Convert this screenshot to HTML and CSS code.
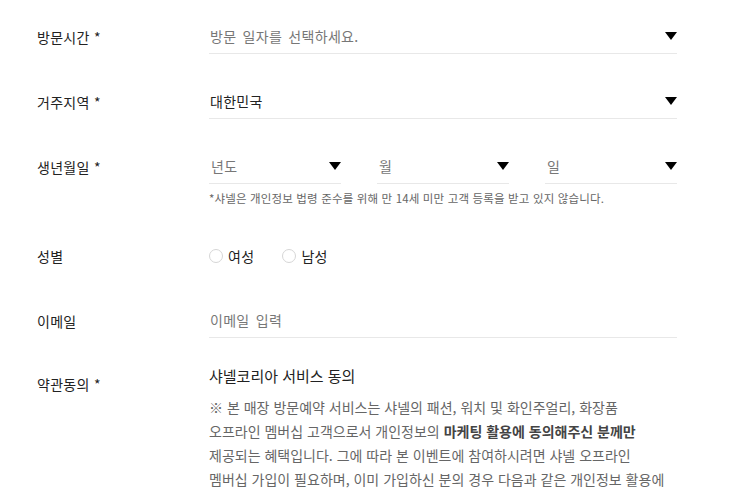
FILE: index.html
```html
<!DOCTYPE html>
<html lang="ko">
<head>
<meta charset="utf-8">
<title>방문예약</title>
<link rel="stylesheet" href="styles.css">
</head>
<body>
<form class="form">
  <div class="row">
    <div class="label">방문시간 *</div>
    <div class="field">
      <div class="select"><span class="placeholder">방문 일자를 선택하세요.</span><span class="arrow"></span></div>
    </div>
  </div>
  <div class="row">
    <div class="label">거주지역 *</div>
    <div class="field">
      <div class="select"><span class="value">대한민국</span><span class="arrow"></span></div>
    </div>
  </div>
  <div class="row row-birth">
    <div class="label">생년월일 *</div>
    <div class="field">
      <div class="birth">
        <div class="select"><span class="placeholder">년도</span><span class="arrow"></span></div>
        <div class="select"><span class="placeholder">월</span><span class="arrow"></span></div>
        <div class="select"><span class="placeholder">일</span><span class="arrow"></span></div>
      </div>
      <p class="help">*샤넬은 개인정보 법령 준수를 위해 만 14세 미만 고객 등록을 받고 있지 않습니다.</p>
    </div>
  </div>
  <div class="row row-gender">
    <div class="label">성별</div>
    <div class="field radios">
      <label class="radio"><span class="circle"></span>여성</label>
      <label class="radio"><span class="circle"></span>남성</label>
    </div>
  </div>
  <div class="row">
    <div class="label">이메일</div>
    <div class="field">
      <div class="select input"><span class="placeholder">이메일 입력</span></div>
    </div>
  </div>
  <div class="row row-terms">
    <div class="label label-terms">약관동의 *</div>
    <div class="field">
      <h3 class="terms-title">샤넬코리아 서비스 동의</h3>
      <p class="terms-body">※ 본 매장 방문예약 서비스는 샤넬의 패션, 워치 및 화인주얼리, 화장품<br>오프라인 멤버십 고객으로서 개인정보의 <strong>마케팅 활용에 동의해주신 분께만</strong><br>제공되는 혜택입니다. 그에 따라 본 이벤트에 참여하시려면 샤넬 오프라인<br>멤버십 가입이 필요하며, 이미 가입하신 분의 경우 다음과 같은 개인정보 활용에<br>대한 동의가 필요합니다.</p>
    </div>
  </div>
</form>
</body>
</html>
```
FILE: styles.css
```css
* { box-sizing: border-box; }
html, body { margin: 0; padding: 0; background: #fff; }
body {
  font-family: "Noto Sans CJK KR", "Noto Sans", sans-serif;
  color: #222;
  font-size: 14px;
  overflow: hidden;
}
.form { padding: 20px 0 0 37px; }
.row {
  display: grid;
  grid-template-columns: 172px 468px;
  margin-bottom: 31px;
}
.label {
  font-size: 14px;
  line-height: 34px;
  letter-spacing: 0.3px;
  color: #222;
}
.select {
  height: 34px;
  border-bottom: 1px solid #e8e8e8;
  display: flex;
  align-items: center;
  justify-content: space-between;
  padding: 0 0 1px 1px;
  font-size: 14px;
  letter-spacing: 0.3px;
  word-spacing: 2px;
}
.placeholder { color: #777; }
.value { color: #222; }
.arrow {
  width: 0; height: 0;
  border-left: 6.5px solid transparent;
  border-right: 6.5px solid transparent;
  border-top: 8px solid #000;
}
.birth {
  display: grid;
  grid-template-columns: repeat(3, 132px);
  column-gap: 36px;
}
.birth .select { padding-left: 2px; }
.help {
  margin: 6px 0 0;
  font-size: 11.5px;
  line-height: 16px;
  letter-spacing: 0.15px;
  color: #666;
}
.row-birth { margin-bottom: 33px; }
.radios { display: flex; align-items: center; gap: 28px; height: 34px; }
.radio { display: flex; align-items: center; gap: 5px; color: #222; letter-spacing: 0.3px; }
.circle {
  width: 14px; height: 14px;
  border: 1px solid #d6d6d6;
  border-radius: 50%;
  background: #fff;
}
.row-terms { margin-top: -3px; }
.label-terms { line-height: 20px; padding-top: 8px; }
.terms-title {
  margin: 0;
  font-size: 15px;
  font-weight: 400;
  line-height: 20px;
  color: #222;
}
.terms-body {
  margin: 9px 0 0;
  font-size: 14px;
  line-height: 24px;
  color: #666;
}
.terms-body strong { color: #444; font-weight: 700; }
```
